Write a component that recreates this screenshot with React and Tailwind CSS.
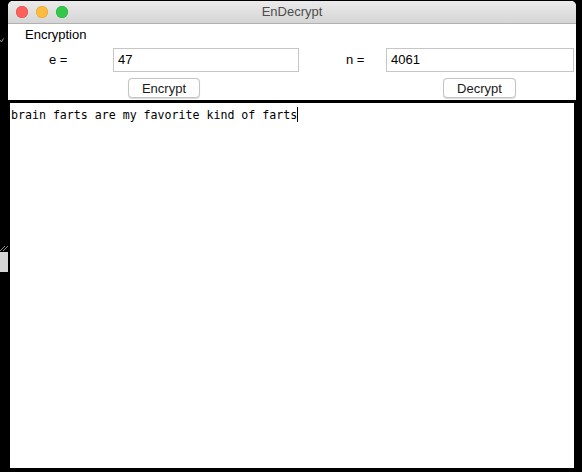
const font = { fontFamily: '"Liberation Sans", Arial, sans-serif' };

const Light = ({ color, ring }) => (
  <span
    className="block w-[12px] h-[12px] rounded-full"
    style={{ background: color, boxShadow: `inset 0 0 0 0.5px ${ring}` }}
  />
);

const Field = ({ value, width }) => (
  <div
    className={`h-[24px] border border-[#c6c6c6] bg-white flex items-center pl-[4px] text-[13px] text-black ${width}`}
  >
    {value}
  </div>
);

const Button = ({ label, width }) => (
  <button
    className={`h-[20px] rounded-[4px] border border-[#c4c4c4] bg-white shadow-[0_0.5px_1px_rgba(0,0,0,0.15)] text-[13px] text-[#1a1a1a] flex items-center justify-center leading-none ${width}`}
  >
    {label}
  </button>
);

export default function App() {
  return (
    <div className="w-[582px] h-[472px] bg-black relative overflow-hidden pt-[1px] pl-[8px]" style={font}>
      {/* bits of a window behind, on the desktop */}
      <div className="absolute left-0 top-[38px] w-[4px] h-[5px]">
        <svg width="4" height="5" viewBox="0 0 4 5">
          <path d="M0 2 L1.5 4 L3.5 0.5" stroke="#9a9a9a" strokeWidth="1" fill="none" />
        </svg>
      </div>
      <div className="absolute left-0 top-[244px] w-[8px] h-[28px]">
        <svg width="8" height="8" viewBox="0 0 8 8" className="block">
          <path d="M0 7 L5 2 M3 7 L8 2" stroke="#8c8c8c" strokeWidth="1" />
        </svg>
        <div className="w-[8px] h-[20px] bg-[#d6d6d6]" />
      </div>

      <div className="w-[568px] h-[467px] rounded-t-[5px] overflow-hidden flex flex-col bg-white">
        {/* title bar */}
        <div className="h-[23px] shrink-0 relative flex items-center bg-gradient-to-b from-[#ebebeb] to-[#d5d5d5] border-b border-[#b1b1b1]">
          <div className="flex gap-[8px] pl-[8px]">
            <Light color="#fc605c" ring="#de4a45" />
            <Light color="#fdbc40" ring="#dea133" />
            <Light color="#34c84a" ring="#27a838" />
          </div>
          <div className="absolute inset-0 flex items-center justify-center text-[13px] text-[#4d4d4d]">
            EnDecrypt
          </div>
        </div>

        {/* controls */}
        <div className="h-[76px] shrink-0 flex flex-col">
          <div className="pl-[17px] pt-[3px] text-[13px] text-black leading-[16px]">Encryption</div>
          <div className="flex items-center mt-[5px]">
            <span className="w-[105px] pl-[41px] text-[13px] text-black">e =</span>
            <Field value="47" width="w-[186px]" />
            <span className="w-[87px] pl-[47px] text-[13px] text-black">n =</span>
            <Field value="4061" width="w-[188px]" />
          </div>
          <div className="flex mt-[6px]">
            <div className="pl-[120px]">
              <Button label="Encrypt" width="w-[72px]" />
            </div>
            <div className="pl-[243px]">
              <Button label="Decrypt" width="w-[73px]" />
            </div>
          </div>
        </div>

        {/* text view */}
        <div className="flex-1 border-t-[3px] border-l-2 border-r-2 border-black bg-white pt-[4px] pl-[1px]">
          <div
            className="text-[11.6px] leading-[14px] text-black flex items-center"
            style={{ fontFamily: '"DejaVu Sans Mono", "Liberation Mono", monospace' }}
          >
            brain farts are my favorite kind of farts
            <span className="inline-block w-[1px] h-[15px] bg-black" />
          </div>
        </div>
      </div>
    </div>
  );
}
